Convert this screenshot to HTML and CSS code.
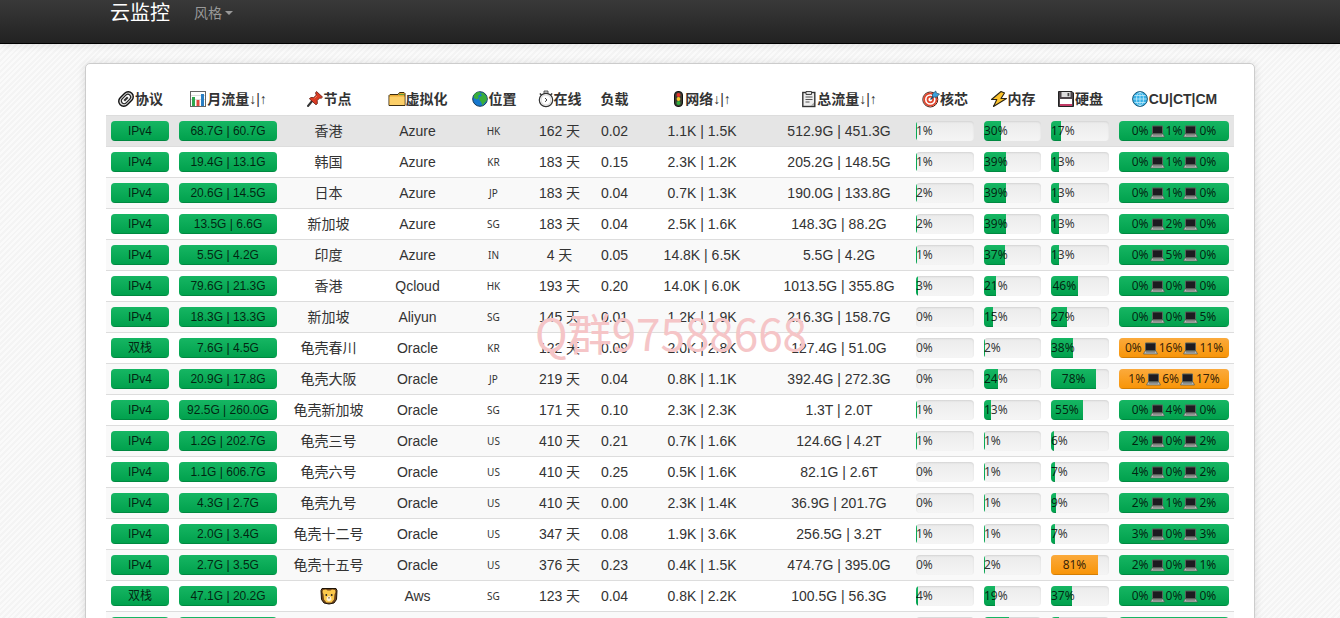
FILE: index.html
```html
<!DOCTYPE html>
<html lang="zh-CN">
<head>
  <meta charset="UTF-8">
  <meta name="viewport" content="width=device-width, initial-scale=1.0">
  <title>云监控</title>
  <link rel="stylesheet" href="styles.css">
</head>
<body>
  <!-- icon sprite -->
  <svg class="sprite" aria-hidden="true">
    <symbol id="i-link" viewBox="0 0 18 18">
      <g transform="rotate(-45 9 9)" fill="none">
        <rect x="0.8" y="4" width="16.4" height="10" rx="5" fill="#ddd" stroke="#111" stroke-width="1.4"/>
        <rect x="3.6" y="6.200" width="10.800" height="5.600" rx="2.800" fill="#fff" stroke="#222" stroke-width="1.200"/>
        <path d="M6.500 9h5" stroke="#333" stroke-width="2.200"/>
      </g>
    </symbol>
    <symbol id="i-chart" viewBox="0 0 18 18">
      <rect x="1.5" y="1.5" width="15" height="15" fill="#fff" stroke="#666"/>
      <path d="M2 5.5h14M2 9.5h14" stroke="#ddd"/>
      <path fill="#2fa84f" d="M3 7h3v9H3z"/>
      <path fill="#e0483e" d="M7.500 10h3v6h-3z"/>
      <path fill="#2a7fc4" d="M12 4h3v12h-3z"/>
    </symbol>
    <symbol id="i-pin" viewBox="0 0 18 18">
      <path d="M2 16l5-6" stroke="#333" stroke-width="2" stroke-linecap="round"/>
      <path d="M10.5 1.5l6 5.5-1.3 1.3-1.6-.3-2.4 2.6.2 3-1.4 1.2-6.6-6L4.700 7.500l3 .1 2.600-2.500-.8-2.200z" fill="#dc3c24" stroke="#5d1a12" stroke-width=".8" stroke-linejoin="round"/>
      <path d="M10.800 6l-2.300 2.400" stroke="#f58a6a"/>
    </symbol>
    <symbol id="i-folder" viewBox="0 0 18 18">
      <path d="M1 15.500V5.500l1-1h8l1.500-2H16l1 1v12z" fill="#e8a934" stroke="#3b2c10" stroke-linejoin="round"/>
      <path d="M1.500 6.500h15V15h-15z" fill="#fccf68"/>
      <path d="M11 4.500h5" stroke="#5aa03c"/>
    </symbol>
    <symbol id="i-earth" viewBox="0 0 18 18">
      <circle cx="9" cy="9" r="7.300" fill="#1577cf" stroke="#173b57"/>
      <path d="M3 5C5 2 8 1.800 9.500 2.300l-.5 2.200-2 1.500 1 2-2 1.500L3 8z" fill="#38ad39"/>
      <path d="M9.500 3l3-.2 3 3.700.5 3.500-2.500 3-2 2.500-1.500-3.500-2-2.500 1-3 2-.5z" fill="#38ad39"/>
    </symbol>
    <symbol id="i-watch" viewBox="0 0 16 18">
      <path d="M6 1h4v2.500H6z" fill="#ccc" stroke="#333" stroke-width=".8"/>
      <path d="M1.800 3.500l2 1.800M14.200 3.500l-2 1.800" stroke="#333" stroke-width="1.500"/>
      <circle cx="8" cy="10" r="6.700" fill="#fff" stroke="#333" stroke-width="1.200"/>
      <circle cx="8" cy="10" r="5" fill="none" stroke="#ccc" stroke-width=".8"/>
      <path d="M7 8l2 2-2 1.800" fill="none" stroke="#444"/>
    </symbol>
    <symbol id="i-light" viewBox="0 0 12 18">
      <rect x="1.500" y="1.500" width="8" height="15" rx="3.500" fill="#3b3d32" stroke="#111"/>
      <circle cx="5.500" cy="5" r="2" fill="#e5322c"/>
      <circle cx="5.500" cy="9" r="1.900" fill="#f5c92d"/>
      <circle cx="5.500" cy="13" r="2" fill="#31ac40"/>
    </symbol>
    <symbol id="i-clip" viewBox="0 0 16 18">
      <rect x="1.800" y="2.500" width="12" height="14" fill="#eee" stroke="#333" stroke-width="1.400"/>
      <path d="M5 1.500h5.500V4.500H5z" fill="#ddd" stroke="#333" stroke-width=".9"/>
      <path d="M4.500 7h7M4.500 9.500h7M4.500 12h4" stroke="#555"/>
      <path d="M13 12.500v3.500H9.500z" fill="#aaa"/>
    </symbol>
    <symbol id="i-target" viewBox="0 0 18 18">
      <circle cx="8.300" cy="9.500" r="7.500" fill="#fff" stroke="#3d1d16" stroke-width="1"/>
      <circle cx="8.300" cy="9.500" r="6.200" fill="none" stroke="#e0442b" stroke-width="1.800"/>
      <circle cx="8.300" cy="9.500" r="2.800" fill="none" stroke="#e0442b" stroke-width="1.800"/>
      <path d="M8.500 9.500l4-4" stroke="#1b4767" stroke-width="1.300"/>
      <path d="M10.500 7V4l3.200-3 .8 2.200 3 .8-3 3.200z" fill="#3aa1dd" stroke="#1b4767" stroke-width=".7"/>
    </symbol>
    <symbol id="i-bolt" viewBox="0 0 18 18">
      <path d="M11 1.500L1.500 9.500h5.300L3.500 16.500 16.500 8.500h-5.500L14.500 3z" fill="#fcc32c" stroke="#2b2414" stroke-width="1.100" stroke-linejoin="round"/>
    </symbol>
    <symbol id="i-disk" viewBox="0 0 18 18">
      <path d="M1.500 1.500H15l1.500 1.500V16.500h-15z" fill="#4c4549" stroke="#222"/>
      <path d="M4.500 2h9v5h-9z" fill="#ddd"/>
      <path d="M10.500 3h1.800v3.200h-1.800z" fill="#444"/>
      <path d="M3 9h12v7H3z" fill="#fff"/>
      <path d="M3 14h12v2H3z" fill="#c23a66"/>
    </symbol>
    <symbol id="i-globe" viewBox="0 0 18 18">
      <circle cx="9" cy="9" r="7.400" fill="#35b0e6" stroke="#1b5878"/>
      <g fill="none" stroke="#c3ecfb" stroke-width=".8">
        <ellipse cx="9" cy="9" rx="3.500" ry="6.700"/>
        <path d="M9 2.300v13.400M2.300 9h13.400M3.500 5.500h11M3.500 12.500h11"/>
      </g>
    </symbol>
    <symbol id="i-laptop" viewBox="0 0 17 14">
      <path d="M3.500 2h10v7.500h-10z" fill="#1d1b20" stroke="#59605a"/>
      <path d="M3 10h11l1.500 3h-14z" fill="#b9bdb9" stroke="#4b514c" stroke-width=".6"/>
      <path d="M4 11h9" stroke="#555" stroke-width=".8"/>
    </symbol>
    <symbol id="i-lion" viewBox="0 0 18 18">
      <path d="M2 1.500h14l1 2-.5 9L14 16l-5 1-5-1-2.500-3.500L1 3.500z" fill="#70451c" stroke="#1d1307"/>
      <path d="M3 3l3-.5 1.500 1h3l1.500-1 3 .5.500 2-1 2.500-.5 5L11.500 15.500h-5l-2.500-3L3.500 7.500 2.500 5z" fill="#fbc84b"/>
      <path d="M7 10l2-1 2 1 .5 3L9 14.500 6.500 13z" fill="#fff1d2"/>
      <path d="M8 10.500h2l-1 1.300z" fill="#3a1d10"/>
      <circle cx="6.300" cy="8" r=".9" fill="#222"/>
      <circle cx="11.700" cy="8" r=".9" fill="#222"/>
    </symbol>
  </svg>

  <header class="navbar">
    <nav class="container navbar-inner">
      <a class="brand" href="#">云监控</a>
      <a class="dropdown-toggle" href="#">风格<b class="caret"></b></a>
    </nav>
  </header>

  <main class="container content">
    <table class="table">
      <colgroup>
        <col class="c-type"><col class="c-month"><col class="c-name"><col class="c-virt"><col class="c-loc">
        <col class="c-uptime"><col class="c-load"><col class="c-net"><col class="c-traffic">
        <col class="c-cpu"><col class="c-mem"><col class="c-hdd"><col class="c-ping">
      </colgroup>
      <thead>
        <tr>
          <th><svg class="icon"><use href="#i-link"/></svg>协议</th>
          <th><svg class="icon"><use href="#i-chart"/></svg>月流量<span class="arrows">↓|↑</span></th>
          <th><svg class="icon"><use href="#i-pin"/></svg>节点</th>
          <th><svg class="icon"><use href="#i-folder"/></svg>虚拟化</th>
          <th><svg class="icon"><use href="#i-earth"/></svg>位置</th>
          <th><svg class="icon icon-md"><use href="#i-watch"/></svg>在线</th>
          <th>负载</th>
          <th><svg class="icon icon-sm"><use href="#i-light"/></svg>网络<span class="arrows">↓|↑</span></th>
          <th><svg class="icon icon-md"><use href="#i-clip"/></svg>总流量<span class="arrows">↓|↑</span></th>
          <th><svg class="icon"><use href="#i-target"/></svg>核芯</th>
          <th><svg class="icon"><use href="#i-bolt"/></svg>内存</th>
          <th><svg class="icon"><use href="#i-disk"/></svg>硬盘</th>
          <th><svg class="icon"><use href="#i-globe"/></svg>CU|CT|CM</th>
        </tr>
      </thead>
      <tbody id="servers"></tbody>
    </table>
  </main>

  <div class="watermark">Q群97588668</div>

  <script src="script.js"></script>
</body>
</html>
```
FILE: styles.css
```css
body {
  margin: 0;
  font-family: "Liberation Sans", "Noto Sans CJK SC", sans-serif;
  font-size: 14px;
  line-height: 20px;
  color: #333;
  background-color: #f7f7f7;
  background-image: repeating-linear-gradient(135deg, #fafafa 0, #fafafa 2px, #f4f4f4 2px, #f4f4f4 4px);
}

a {
  text-decoration: none;
}

.sprite {
  display: none;
}

.container {
  box-sizing: border-box;
  max-width: 1170px;
  margin: 0 auto;
}

/* navbar */
.navbar {
  background: linear-gradient(#393939, #222);
  border-bottom: 1px solid #000;
  box-shadow: 0 1px 8px rgba(0, 0, 0, 0.1);
}

.navbar-inner {
  display: flex;
  align-items: center;
  gap: 24px;
  padding: 0 25px 17px;
}

.brand {
  font-size: 20px;
  line-height: 26px;
  color: #fff;
}

.dropdown-toggle {
  display: flex;
  align-items: center;
  gap: 3px;
  color: #999;
}

.caret {
  border-top: 4px solid #999;
  border-left: 4px solid transparent;
  border-right: 4px solid transparent;
}

/* server list */
.content {
  margin-top: 19px;
  padding: 20px;
  background: #fff;
  border: 1px solid #ccc;
  border-radius: 5px;
  box-shadow: 0 1px 8px rgba(0, 0, 0, 0.12);
}

.table {
  width: 100%;
  table-layout: fixed;
  border-collapse: collapse;
}

.c-type, .c-cpu, .c-hdd { width: 68px; }
.c-month { width: 108px; }
.c-name { width: 93px; }
.c-virt { width: 85px; }
.c-loc, .c-mem { width: 67px; }
.c-uptime { width: 65px; }
.c-load { width: 45px; }
.c-net { width: 130px; }
.c-traffic { width: 144px; }
.c-ping { width: 120px; }

.table th,
.table td {
  height: 20px;
  padding: 5px;
  text-align: center;
  white-space: nowrap;
  vertical-align: middle;
}

.table th {
  padding: 5px 0 6px;
}

.table td {
  border-top: 1px solid #ddd;
}

.table tbody tr:nth-child(odd) td {
  background: #f9f9f9;
}

.table tbody tr.active td {
  background: #e5e5e5;
}

.icon {
  width: 18px;
  height: 18px;
  vertical-align: -4px;
}

.icon-md {
  width: 16px;
}

.icon-sm {
  width: 12px;
}

.arrows {
  font-weight: normal;
}

.location {
  font: 10px/20px "Noto Sans", sans-serif;
}

/* progress bars */
.progress {
  height: 20px;
  border-radius: 4px;
  overflow: hidden;
  background: linear-gradient(#ebebeb, #f5f5f5);
  box-shadow: inset 0 1px 2px rgba(0, 0, 0, 0.1);
}

.bar {
  height: 20px;
  font-size: 12px;
  color: rgba(0, 0, 0, 0.8);
  background: linear-gradient(#16b663, #00a04c);
  box-shadow: inset 0 -1px 0 rgba(0, 0, 0, 0.15);
}

.bar.full {
  width: 100%;
}

.bar.warning {
  background: linear-gradient(#fbaa3c, #f89406);
}

.percent {
  font-family: "Noto Sans", sans-serif;
}

.laptop {
  width: 17px;
  height: 14px;
  vertical-align: -3px;
}

.watermark {
  position: absolute;
  top: 310px;
  left: 50%;
  margin-left: -135px;
  font: 44px/44px "Noto Sans CJK SC", sans-serif;
  color: #f5c5c7;
  pointer-events: none;
}
```
FILE: script.js
```js
// protocol, month traffic, name, virt, location, uptime, load, network, traffic, cpu, mem, hdd, CU/CT/CM
const servers = [
  ["IPv4", "68.7G | 60.7G", "香港", "Azure", "HK", 162, "0.02", "1.1K | 1.5K", "512.9G | 451.3G", 1, 30, 17, [0, 1, 0]],
  ["IPv4", "19.4G | 13.1G", "韩国", "Azure", "KR", 183, "0.15", "2.3K | 1.2K", "205.2G | 148.5G", 1, 39, 13, [0, 1, 0]],
  ["IPv4", "20.6G | 14.5G", "日本", "Azure", "JP", 183, "0.04", "0.7K | 1.3K", "190.0G | 133.8G", 2, 39, 13, [0, 1, 0]],
  ["IPv4", "13.5G | 6.6G", "新加坡", "Azure", "SG", 183, "0.04", "2.5K | 1.6K", "148.3G | 88.2G", 2, 39, 13, [0, 2, 0]],
  ["IPv4", "5.5G | 4.2G", "印度", "Azure", "IN", 4, "0.05", "14.8K | 6.5K", "5.5G | 4.2G", 1, 37, 13, [0, 5, 0]],
  ["IPv4", "79.6G | 21.3G", "香港", "Qcloud", "HK", 193, "0.20", "14.0K | 6.0K", "1013.5G | 355.8G", 3, 21, 46, [0, 0, 0]],
  ["IPv4", "18.3G | 13.3G", "新加坡", "Aliyun", "SG", 145, "0.01", "1.2K | 1.9K", "216.3G | 158.7G", 0, 15, 27, [0, 0, 5]],
  ["双栈", "7.6G | 4.5G", "龟壳春川", "Oracle", "KR", 122, "0.09", "2.0K | 2.8K", "127.4G | 51.0G", 0, 2, 38, [0, 16, 11]],
  ["IPv4", "20.9G | 17.8G", "龟壳大阪", "Oracle", "JP", 219, "0.04", "0.8K | 1.1K", "392.4G | 272.3G", 0, 24, 78, [1, 6, 17]],
  ["IPv4", "92.5G | 260.0G", "龟壳新加坡", "Oracle", "SG", 171, "0.10", "2.3K | 2.3K", "1.3T | 2.0T", 1, 13, 55, [0, 4, 0]],
  ["IPv4", "1.2G | 202.7G", "龟壳三号", "Oracle", "US", 410, "0.21", "0.7K | 1.6K", "124.6G | 4.2T", 1, 1, 6, [2, 0, 2]],
  ["IPv4", "1.1G | 606.7G", "龟壳六号", "Oracle", "US", 410, "0.25", "0.5K | 1.6K", "82.1G | 2.6T", 0, 1, 7, [4, 0, 2]],
  ["IPv4", "4.3G | 2.7G", "龟壳九号", "Oracle", "US", 410, "0.00", "2.3K | 1.4K", "36.9G | 201.7G", 0, 1, 9, [2, 1, 2]],
  ["IPv4", "2.0G | 3.4G", "龟壳十二号", "Oracle", "US", 347, "0.08", "1.9K | 3.6K", "256.5G | 3.2T", 1, 1, 7, [3, 0, 3]],
  ["IPv4", "2.7G | 3.5G", "龟壳十五号", "Oracle", "US", 376, "0.23", "0.4K | 1.5K", "474.7G | 395.0G", 0, 2, 81, [2, 0, 1]],
  ["双栈", "47.1G | 20.2G", '<svg class="icon"><use href="#i-lion"/></svg>', "Aws", "SG", 123, "0.04", "0.8K | 2.2K", "100.5G | 56.3G", 4, 19, 37, [0, 0, 0]],
  ["IPv4", "3.1G | 2.4G", "香港", "Aws", "HK", 96, "0.02", "1.0K | 1.2K", "60.2G | 41.8G", 0, 43, 14, [0, 0, 0]]
];

const laptop = '<svg class="laptop"><use href="#i-laptop"/></svg>';

function label(text) {
  return `<div class="progress"><div class="bar full">${text}</div></div>`;
}

function usage(value) {
  const state = value > 80 ? " warning" : "";
  return `<div class="progress"><div class="bar percent${state}" style="width: ${value}%">${value}%</div></div>`;
}

function ping(values) {
  const state = Math.max(...values) > 10 ? " warning" : "";
  const text = values.map(v => v + "%").join(laptop);
  return `<div class="progress"><div class="bar full percent${state}">${text}</div></div>`;
}

document.getElementById("servers").innerHTML = servers.map((s, i) => `
  <tr${i === 0 ? ' class="active"' : ""}>
    <td>${label(s[0])}</td>
    <td>${label(s[1])}</td>
    <td>${s[2]}</td>
    <td>${s[3]}</td>
    <td class="location">${s[4]}</td>
    <td>${s[5]} 天</td>
    <td>${s[6]}</td>
    <td>${s[7]}</td>
    <td>${s[8]}</td>
    <td>${usage(s[9])}</td>
    <td>${usage(s[10])}</td>
    <td>${usage(s[11])}</td>
    <td>${ping(s[12])}</td>
  </tr>`).join("");
```
